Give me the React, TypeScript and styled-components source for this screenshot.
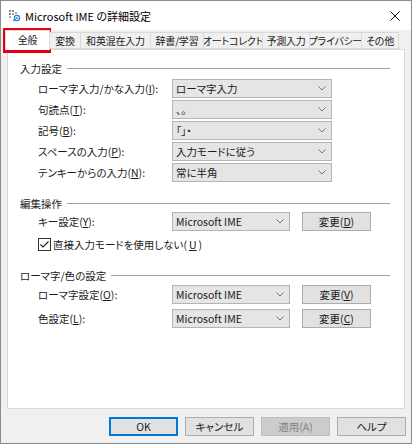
import styled, { createGlobalStyle } from 'styled-components';

const GlobalStyle = createGlobalStyle`
  body {
    margin: 0;
    background: #ffffff;
    font-family: "Noto Sans CJK JP", "Liberation Sans", sans-serif;
    font-feature-settings: "palt";
  }
`;

const tabs = [
  { label: '全般', w: 45 },
  { label: '変換', w: 31 },
  { label: '和英混在入力', w: 70 },
  { label: '辞書/学習', w: 53 },
  { label: 'オートコレクト', w: 59 },
  { label: '予測入力', w: 47 },
  { label: 'プライバシー', w: 52 },
  { label: 'その他', w: 37 },
];

const inputRows = [
  { label: 'ローマ字入力/かな入力(', key: 'I', value: 'ローマ字入力' },
  { label: '句読点(', key: 'T', value: '、。' },
  { label: '記号(', key: 'B', value: '「」・' },
  { label: 'スペースの入力(', key: 'P', value: '入力モードに従う' },
  { label: 'テンキーからの入力(', key: 'N', value: '常に半角' },
];

function Chevron() {
  return (
    <svg width="8" height="5" viewBox="0 0 8 5">
      <polyline points="0.5,0.5 4,4 7.5,0.5" fill="none" stroke="#777" strokeWidth="1" />
    </svg>
  );
}

function Select({ value, $w }: { value: string; $w: number }) {
  return (
    <SelectBox $w={$w}>
      <span>{value}</span>
      <Chevron />
    </SelectBox>
  );
}

function ImeIcon() {
  return (
    <svg width="13" height="13" viewBox="0 0 13 13">
      <rect x="1" y="1" width="2" height="2" fill="#8a8a8a" />
      <rect x="4" y="1" width="2" height="2" fill="#8a8a8a" />
      <rect x="1" y="4" width="2" height="2" fill="#8a8a8a" />
      <rect x="4" y="4" width="2" height="2" fill="#a8a8a8" />
      <rect x="7" y="3" width="2" height="2" fill="#a8a8a8" />
      <rect x="1" y="7" width="2" height="2" fill="#a8a8a8" />
      <circle cx="9" cy="9" r="2.6" fill="none" stroke="#2b7fd6" strokeWidth="1.2" />
      <path d="M5 12 L7.5 10" stroke="#2b7fd6" strokeWidth="1.2" />
      <circle cx="9" cy="9" r="0.9" fill="#2b7fd6" />
    </svg>
  );
}

function App() {
  return (
    <Window>
      <GlobalStyle />
      <TitleBar>
        <ImeIcon />
        <Title>Microsoft IME の詳細設定</Title>
        <Close>
          <svg width="10" height="10" viewBox="0 0 10 10">
            <path d="M0.5 0.5 L9.5 9.5 M9.5 0.5 L0.5 9.5" stroke="#111" strokeWidth="1" />
          </svg>
        </Close>
      </TitleBar>
      <Content>
        <TabStrip>
          {tabs.map((t, i) => (
            <Tab key={t.label} $w={t.w} $active={i === 0}>
              {t.label}
            </Tab>
          ))}
        </TabStrip>
        <Panel>
          <Heading $top={11}>入力設定</Heading>
          <Rows $top={4} $gap={2}>
            {inputRows.map((r) => (
              <Row key={r.label}>
                <Label>
                  {r.label}
                  <u>{r.key}</u>):
                </Label>
                <Select value={r.value} $w={160} />
              </Row>
            ))}
          </Rows>

          <Heading $top={14}>編集操作</Heading>
          <Rows $top={2} $gap={2}>
            <Row>
              <Label>
                キー設定(<u>Y</u>):
              </Label>
              <Select value="Microsoft IME" $w={118} />
              <Button $w={69}>
                変更(<u>D</u>)
              </Button>
            </Row>
          </Rows>
          <CheckRow>
            <CheckBox>
              <svg width="11" height="11" viewBox="0 0 11 11">
                <polyline points="1.5,5.5 4,8 9.5,2.5" fill="none" stroke="#222" strokeWidth="1.2" />
              </svg>
            </CheckBox>
            直接入力モードを使用しない(<u>U</u>)
          </CheckRow>

          <Heading $top={17}>ローマ字/色の設定</Heading>
          <Rows $top={3} $gap={5}>
            <Row>
              <Label>
                ローマ字設定(<u>O</u>):
              </Label>
              <Select value="Microsoft IME" $w={118} />
              <Button $w={69}>
                変更(<u>V</u>)
              </Button>
            </Row>
            <Row>
              <Label>
                色設定(<u>L</u>):
              </Label>
              <Select value="Microsoft IME" $w={118} />
              <Button $w={69}>
                変更(<u>C</u>)
              </Button>
            </Row>
          </Rows>
        </Panel>
        <Footer>
          <Button $w={69} $default>
            OK
          </Button>
          <Button $w={69}>キャンセル</Button>
          <Button $w={69} $disabled>
            適用(A)
          </Button>
          <Button $w={69}>ヘルプ</Button>
        </Footer>
      </Content>
      <Highlight />
    </Window>
  );
}

const Window = styled.div`
  position: relative;
  width: 412px;
  height: 444px;
  box-sizing: border-box;
  border: 1px solid #8c8c8c;
  background: #f0f0f0;
  display: flex;
  flex-direction: column;
  font-size: 10.5px;
  color: #1a1a1a;
`;

const TitleBar = styled.div`
  height: 29px;
  background: #ffffff;
  display: flex;
  align-items: center;
  padding: 0 8px 0 7px;
  gap: 4px;
`;

const Title = styled.div`
  flex: 1;
  font-size: 11px;
  color: #000;
`;

const Close = styled.div`
  display: flex;
  align-items: center;
  margin-right: 3px;
`;

const Content = styled.div`
  flex: 1;
  display: flex;
  flex-direction: column;
  padding: 0 6px;
`;

// tabs sit on top of the panel border
const TabStrip = styled.div`
  height: 19px;
  display: flex;
  align-items: flex-end;
  margin-left: -2px;
  position: relative;
  z-index: 1;
`;

const Tab = styled.div<{ $w: number; $active?: boolean }>`
  width: ${(p) => p.$w}px;
  height: ${(p) => (p.$active ? 20 : 17)}px;
  box-sizing: border-box;
  margin-bottom: ${(p) => (p.$active ? -1 : 0)}px;
  border: 1px solid #d9d9d9;
  border-bottom: ${(p) => (p.$active ? 'none' : '1px solid #d9d9d9')};
  border-left: ${(p) => (p.$active ? '1px solid #d9d9d9' : 'none')};
  background: ${(p) => (p.$active ? '#ffffff' : '#f0f0f0')};
  display: flex;
  align-items: center;
  justify-content: center;
  font-size: 10px;
  letter-spacing: -0.2px;
  white-space: nowrap;
  overflow: hidden;
  padding-bottom: ${(p) => (p.$active ? 2 : 0)}px;
`;

const Panel = styled.div`
  height: 360px;
  box-sizing: border-box;
  background: #ffffff;
  border: 1px solid #d9d9d9;
  display: flex;
  flex-direction: column;
  padding: 0 14px 0 12px;
`;

const Heading = styled.div<{ $top: number }>`
  margin-top: ${(p) => p.$top}px;
  height: 14px;
  display: flex;
  align-items: center;
  gap: 5px;
  white-space: nowrap;
  &::after {
    content: '';
    flex: 1;
    height: 1px;
    background: #a0a0a0;
  }
`;

const Rows = styled.div<{ $top: number; $gap: number }>`
  margin-top: ${(p) => p.$top}px;
  display: flex;
  flex-direction: column;
  gap: ${(p) => p.$gap}px;
`;

const Row = styled.div`
  display: flex;
  align-items: center;
  height: 19px;
  padding-left: 18px;
`;

const Label = styled.div`
  width: 134px;
  white-space: nowrap;
`;

const SelectBox = styled.div<{ $w: number }>`
  width: ${(p) => p.$w}px;
  height: 19px;
  box-sizing: border-box;
  border: 1px solid #b4b4b4;
  background: #e5e5e5;
  display: flex;
  align-items: center;
  justify-content: space-between;
  padding: 0 5px 0 3px;
  white-space: nowrap;
`;

const Button = styled.div<{ $w: number; $default?: boolean; $disabled?: boolean }>`
  width: ${(p) => p.$w}px;
  height: 19px;
  box-sizing: border-box;
  margin-left: 12px;
  border: ${(p) =>
    p.$default ? '2px solid #0078d7' : p.$disabled ? '1px solid #bfbfbf' : '1px solid #adadad'};
  background: ${(p) => (p.$disabled ? '#cccccc' : '#e1e1e1')};
  color: ${(p) => (p.$disabled ? '#838383' : '#1a1a1a')};
  display: flex;
  align-items: center;
  justify-content: center;
  white-space: nowrap;
`;

const CheckRow = styled.div`
  margin-top: 6px;
  height: 14px;
  display: flex;
  align-items: center;
  gap: 2px;
  padding-left: 18px;
  white-space: nowrap;
`;

const CheckBox = styled.div`
  width: 13px;
  height: 13px;
  box-sizing: border-box;
  border: 1px solid #333;
  background: #fff;
  display: flex;
  align-items: center;
  justify-content: center;
`;

const Footer = styled.div`
  display: flex;
  justify-content: flex-end;
  padding-top: 8px;
  margin-right: -1px;
  & > div {
    margin-left: 7px;
  }
`;

// red annotation frame over the first tab
const Highlight = styled.div`
  position: absolute;
  left: 2px;
  top: 27px;
  width: 48px;
  height: 25px;
  box-sizing: border-box;
  border: 3px solid #e60012;
  pointer-events: none;
`;

export default App;
